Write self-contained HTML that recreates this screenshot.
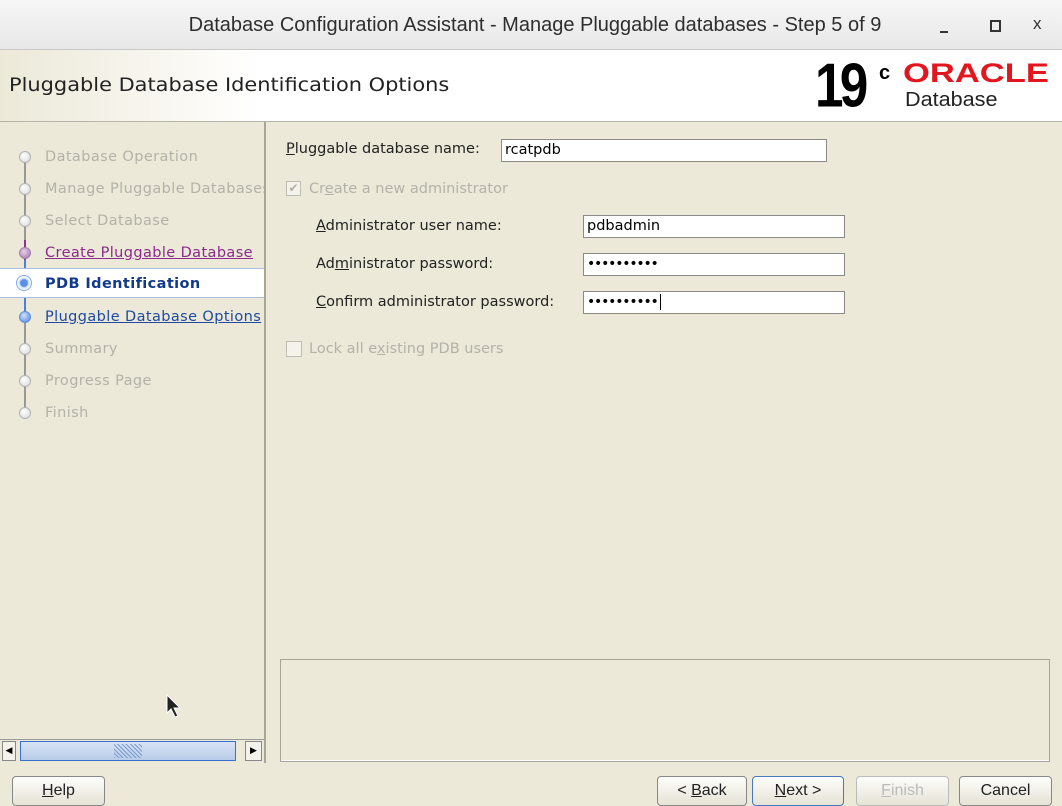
<!DOCTYPE html>
<html><head><style>
body{margin:0;width:1062px;height:803px;overflow:hidden;background:#ece9d8;font-family:"DejaVu Sans",sans-serif;position:relative}
.a{position:absolute}
.tb{left:0;top:0;width:1062px;height:49px;background:linear-gradient(#f6f6f6,#e8e8e8);border-bottom:1px solid #c8c8c8}
.tt{left:0;width:1062px;top:14px;text-align:center;font:20px "Liberation Sans",sans-serif;color:#2e2e2e;padding-left:4px}
.hd{left:0;top:50px;width:1062px;height:71px;background:linear-gradient(90deg,#ece9d8 0,#fff 260px);border-bottom:1px solid #b8b5a8}
.st{left:45px;font-size:14.5px;color:#b4b2a8;letter-spacing:0.4px}
.dot{left:19px;width:10px;height:10px;border-radius:50%;background:radial-gradient(circle at 40% 35%,#fff,#d8d8dc);border:1px solid #b0b0b8}
.lbl{font-size:14.5px;color:#222}
.in{background:#fff;border:1px solid #8a8a86;height:23px;box-sizing:border-box;font-size:14.5px;padding:2px 3px;color:#000}
.pw{font-size:14px;padding-top:2px;letter-spacing:-1.2px}
.btn{top:776px;height:30px;border:1px solid #888;border-radius:4px;background:linear-gradient(#fdfdfb,#e6e3d6);box-sizing:border-box;text-align:center;font:16px "Liberation Sans",sans-serif;padding-top:5px;color:#222}
</style></head><body>
<div class="a tb"></div>
<div class="a tt">Database Configuration Assistant - Manage Pluggable databases - Step 5 of 9</div>
<div class="a" style="left:940px;top:31px;width:8px;height:2px;background:#333"></div>
<div class="a" style="left:990px;top:20px;width:7px;height:8px;border:2px solid #333"></div>
<div class="a" style="left:1033px;top:14px;font:17px 'Liberation Sans';color:#333">x</div>
<div class="a hd"></div>
<div class="a" style="left:9px;top:74px;font:19px 'DejaVu Sans',sans-serif;color:#222;transform:scaleX(1.1);transform-origin:left">Pluggable Database Identification Options</div>
<div class="a" style="left:815px;top:50px;font:bold 54px 'Liberation Sans',sans-serif;color:#000;letter-spacing:-4px;transform:scale(0.95,1.15);transform-origin:left top">19</div>
<div class="a" style="left:879px;top:62px;font:bold 20px 'Liberation Sans';color:#000">c</div>
<div class="a" style="left:903px;top:58px;font:bold 27px 'Liberation Sans';color:#e2161e;transform:scaleX(1.28);transform-origin:left">ORACLE</div>
<div class="a" style="left:905px;top:89px;font:20px 'Liberation Sans';color:#222;transform:scaleX(1.08);transform-origin:left">Database</div>
<div class="a" style="left:264px;top:122px;width:2px;height:641px;background:#a9a696"></div>
<div class="a" style="left:24px;top:160px;width:2px;height:88px;background:#999"></div>
<div class="a" style="left:24px;top:240px;width:2px;height:20px;background:#903090"></div>
<div class="a" style="left:24px;top:260px;width:2px;height:60px;background:#4a80e0"></div>
<div class="a" style="left:24px;top:320px;width:2px;height:92px;background:#999"></div>
<div class="a" style="left:0;top:268px;width:264px;height:30px;background:#fff;border-top:1px solid #a8c0e0;border-bottom:1px solid #a8c0e0;box-sizing:border-box"></div>
<div class="a dot" style="top:151px"></div><div class="a st" style="top:149px">Database Operation</div>
<div class="a dot" style="top:183px"></div><div class="a st" style="top:181px;width:219px;overflow:hidden;white-space:nowrap">Manage Pluggable Databases</div>
<div class="a dot" style="top:215px"></div><div class="a st" style="top:213px">Select Database</div>
<div class="a dot" style="top:247px;background:radial-gradient(circle at 40% 35%,#e8d0e8,#a070a8);border-color:#a080a8"></div><div class="a st" style="top:245px;color:#8a2a8a;text-decoration:underline">Create Pluggable Database</div>
<div class="a" style="left:16px;top:275px;width:14px;height:14px;border-radius:50%;border:1px solid #80a8e0;background:radial-gradient(circle,#5a90e8 35%,#cfe0f8 45%,#fff 70%)"></div><div class="a st" style="top:276px;color:#123a8c;font-weight:bold">PDB Identification</div>
<div class="a dot" style="top:311px;background:radial-gradient(circle at 40% 35%,#d0e0ff,#4a80e0);border-color:#6090d0"></div><div class="a st" style="top:309px;color:#1f4aa0;text-decoration:underline">Pluggable Database Options</div>
<div class="a dot" style="top:343px"></div><div class="a st" style="top:341px">Summary</div>
<div class="a dot" style="top:375px"></div><div class="a st" style="top:373px">Progress Page</div>
<div class="a dot" style="top:407px"></div><div class="a st" style="top:405px">Finish</div>
<div class="a" style="left:0;top:739px;width:264px;height:24px;background:#ece9d8;border-top:1px solid #999"></div>
<div class="a" style="left:2px;top:741px;width:14px;height:20px;border:1px solid #888;box-sizing:border-box;background:#f4f2ea;font-size:9px;line-height:18px;text-align:center">◀</div>
<div class="a" style="left:20px;top:741px;width:216px;height:20px;border:1px solid #3a70d0;box-sizing:border-box;background:linear-gradient(#d8e4f4,#b8cce8)"></div>
<div class="a" style="left:114px;top:744px;width:28px;height:14px;background:repeating-linear-gradient(45deg,#7a9ad0 0 1px,transparent 1px 3px)"></div>
<div class="a" style="left:245px;top:741px;width:17px;height:20px;border:1px solid #888;box-sizing:border-box;background:#f4f2ea;font-size:9px;line-height:18px;text-align:center">▶</div>
<div class="a lbl" style="left:286px;top:141px"><u>P</u>luggable database name:</div>
<div class="a in" style="left:501px;top:139px;width:326px">rcatpdb</div>
<div class="a" style="left:286px;top:181px;width:15px;height:15px;border:1px solid #c0beb4;background:#f4f2ea;box-sizing:border-box;color:#b0aea4;font-size:12px;line-height:13px;text-align:center">✔</div>
<div class="a lbl" style="left:309px;top:181px;color:#b4b2a8">Cr<u>e</u>ate a new administrator</div>
<div class="a lbl" style="left:316px;top:218px"><u>A</u>dministrator user name:</div>
<div class="a in" style="left:583px;top:215px;width:262px">pdbadmin</div>
<div class="a lbl" style="left:316px;top:256px">Ad<u>m</u>inistrator password:</div>
<div class="a in pw" style="left:583px;top:253px;width:262px">••••••••••</div>
<div class="a lbl" style="left:316px;top:294px"><u>C</u>onfirm administrator password:</div>
<div class="a in pw" style="left:583px;top:291px;width:262px">••••••••••<span style="display:inline-block;width:1px;height:16px;background:#000;vertical-align:middle;margin-left:2px"></span></div>
<div class="a" style="left:286px;top:341px;width:16px;height:16px;border:1px solid #c0beb4;background:#f4f2ea;box-sizing:border-box"></div>
<div class="a lbl" style="left:309px;top:341px;color:#b4b2a8">Lock all e<u>x</u>isting PDB users</div>
<div class="a" style="left:280px;top:659px;width:770px;height:103px;border:1px solid #a8a598;box-sizing:border-box;box-shadow:inset 0 -1px #fff"></div>
<div class="a btn" style="left:12px;width:93px"><u>H</u>elp</div>
<div class="a btn" style="left:657px;width:90px">&lt; <u>B</u>ack</div>
<div class="a btn" style="left:752px;width:92px;border-color:#4a78c0"><u>N</u>ext &gt;</div>
<div class="a btn" style="left:856px;width:93px;color:#bbb;border-color:#bbb"><u>F</u>inish</div>
<div class="a btn" style="left:959px;width:93px">Cancel</div>
<svg class="a" style="left:166px;top:694px" width="16" height="26"><path d="M1 1 L1 19 L5 15 L9 23 L12 22 L8 14 L14 14 Z" fill="#222" stroke="#fff" stroke-width="1"/></svg>
</body></html>
